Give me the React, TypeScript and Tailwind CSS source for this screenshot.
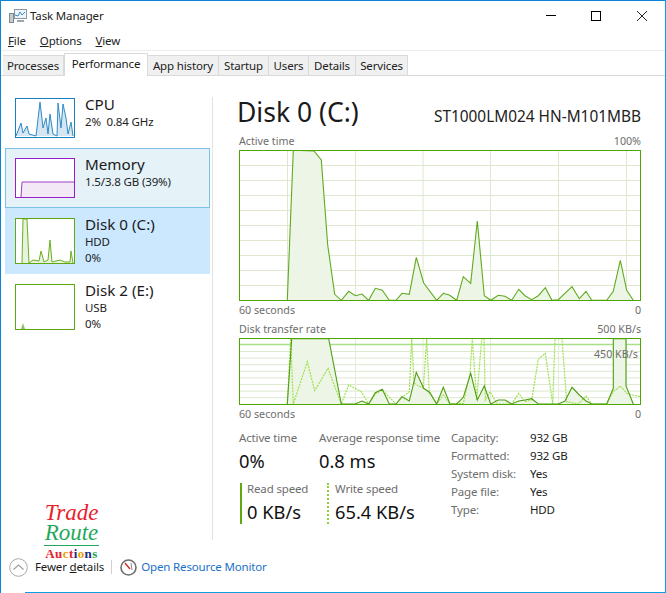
import React from "react";

const sans = "font-['Noto_Sans',sans-serif]";
const small = "text-[11.5px] tracking-[-0.15px]";
const tiny = "text-[10.7px] leading-[16px] text-[#6d6d6d]";

type P = [number, number];
const z4: P[] = [[172,511],[190,61],[252,63],[274,90],[293,345],[314,493],[334,511],[356,484],[376,497],[396,492],[416,511],[436,475],[457,481],[478,511],[498,511],[516,490],[538,493],[559,382],[581,459],[620,511],[640,490]];
const z5: P[] = [[8,490],[28,495],[50,511],[70,440],[92,460],[112,273],[133,497],[152,511],[175,496],[195,499],[215,511],[236,478],[255,497],[275,509],[295,497],[316,473],[336,511],[355,509],[396,470],[418,506],[438,484],[455,511],[500,511],[520,484],[541,391],[560,481],[580,511]];
const active: P[] = [...z4.map(([x, y]): P => [230 + x / 3 - 239, 130 + y / 3 - 150]), ...z5.map(([x, y]): P => [440 + x / 3 - 239, 130 + y / 3 - 150])];

const r6: P[] = [[172,252],[185,56],[296,56],[334,252],[375,252],[396,243],[416,252],[436,218],[457,208],[478,252],[498,252],[516,230],[538,243],[559,157],[581,205],[600,218],[620,252],[640,202]];
const r7: P[] = [[10,202],[30,252],[50,252],[70,232],[92,160],[112,240],[133,198],[152,252],[175,240],[195,240],[215,252],[236,243],[255,240],[275,236],[295,252],[355,252],[375,243],[396,202],[418,225],[438,243],[455,252],[500,252],[520,205],[520,56],[558,56],[558,198],[580,252]];
const read: P[] = [...r6.map(([x, y]): P => [230 + x / 3 - 239, 320 + y / 3 - 338]), ...r7.map(([x, y]): P => [440 + x / 3 - 239, 320 + y / 3 - 338])];

const w6: P[] = [[172,252],[182,56],[190,252],[232,125],[254,212],[294,145],[334,252],[356,195],[394,215],[416,252],[436,222],[457,210],[498,252],[516,232],[538,215],[545,56],[552,190],[580,205],[590,56],[598,218],[620,252],[640,225]];
const w7: P[] = [[30,252],[70,250],[90,160],[97,56],[110,240],[125,56],[132,56],[136,240],[150,215],[172,252],[215,252],[236,220],[255,245],[275,240],[295,118],[316,100],[338,252],[345,56],[366,56],[380,245],[415,252],[438,228],[455,252],[500,252],[520,215],[541,198],[560,220],[578,225],[600,230]];
const write: P[] = [...w6.map(([x, y]): P => [230 + x / 3 - 239, 320 + y / 3 - 338]), ...w7.map(([x, y]): P => [440 + x / 3 - 239, 320 + y / 3 - 338])];

const pts = (a: P[]) => a.map(([x, y]) => `${x.toFixed(1)},${y.toFixed(1)}`).join(" ");
const vGrid = [48.5, 116.5, 184, 251.5, 319.5, 387.5];

function MainChart() {
  const h = Array.from({ length: 9 }, (_, i) => 15.5 + i * 15);
  return (
    <svg width="403" height="152" className="block">
      {h.map((y) => <line key={y} x1="1" x2="401" y1={y} y2={y} stroke="#dde8cf" />)}
      {vGrid.map((x) => <line key={x} x1={x} x2={x} y1="1" y2="150" stroke="#dde8cf" />)}
      <polygon points={pts(active)} fill="#edf5e6" />
      <polyline points={pts(active)} fill="none" stroke="#5fab1e" strokeWidth="1.1" />
      <rect x="0.5" y="0.5" width="401" height="150" fill="none" stroke="#4da600" />
    </svg>
  );
}

function RateChart() {
  const h = Array.from({ length: 9 }, (_, i) => 13.5 + i * 6.6);
  return (
    <svg width="403" height="68" className="block">
      {h.map((y) => <line key={y} x1="1" x2="401" y1={y} y2={y} stroke="#dde8cf" />)}
      {[116.5, 184, 251.5, 319.5, 387.5].map((x) => <line key={x} x1={x} x2={x} y1="1" y2="66" stroke="#e3ecd9" />)}
      <line x1="1" x2="401" y1="6.5" y2="6.5" stroke="#a8e08a" strokeWidth="1.6" />
      <polygon points={pts(read)} fill="#edf5e6" />
      <polyline points={pts(write)} fill="none" stroke="#9fe04f" strokeWidth="1.2" strokeDasharray="2 1" />
      <polyline points={pts(read)} fill="none" stroke="#4f9e12" strokeWidth="1.1" />
      <rect x="0.5" y="0.5" width="401" height="66" fill="none" stroke="#4da600" />
    </svg>
  );
}

function Thumb({ color, h, children }: { color: string; h: number; children?: React.ReactNode }) {
  return (
    <svg width="60" height={h} className="block shrink-0 bg-white">
      {children}
      <rect x="0.5" y="0.5" width="59" height={h - 1} fill="none" stroke={color} />
    </svg>
  );
}

function Item({ name, l2, l3, thumb, cls }: { name: string; l2: string; l3?: string; thumb: React.ReactNode; cls: string }) {
  return (
    <div className={`flex gap-[10px] ${cls}`}>
      {thumb}
      <div className="flex flex-col -mt-[4px]">
        <div className="text-[15.2px] leading-[20px] text-[#1a1a1a]">{name}</div>
        <div className={`${small} leading-[16px] text-[#222]`}>{l2}</div>
        {l3 && <div className={`${small} leading-[16px] text-[#222]`}>{l3}</div>}
      </div>
    </div>
  );
}

function Tab({ label, w, active }: { label: string; w: string; active?: boolean }) {
  return active ? (
    <div className={`${w} h-[23px] -mt-[2px] bg-white border border-b-0 border-[#d9d9d9] flex items-start justify-center pt-[2px] ${small} leading-[16px] text-[#1a1a1a] relative z-10`}>{label}</div>
  ) : (
    <div className={`${w} h-[20px] bg-[#f0f0f0] border border-b-0 border-l-0 border-[#d9d9d9] flex items-center justify-center ${small} leading-[16px] text-[#222]`}>{label}</div>
  );
}

function Stat({ label, value, cls }: { label: string; value: string; cls?: string }) {
  return (
    <div className={cls}>
      <div className={`${small} leading-[16px] text-[#6d6d6d]`}>{label}</div>
      <div className="text-[18.3px] leading-[24px] mt-[3px] text-[#111]">{value}</div>
    </div>
  );
}

export default function App() {
  return (
    <div className={`${sans} w-[666px] h-[593px] bg-white flex flex-col overflow-hidden border-t border-l border-r border-t-[#0a84d8] border-l-[#0a84d8] border-r-[#0a9fe6]`}>
      <div className="h-[29px] shrink-0 flex items-center">
        <svg width="20" height="16" className="ml-[8px]" viewBox="0 0 20 16">
          <rect x="5.5" y="1.5" width="12" height="9" fill="#eef5fa" stroke="#8a9aa5" />
          <polyline points="6,7 9,8 11,4 13,7 16,4" fill="none" stroke="#3a8fc9" />
          <rect x="0.5" y="5.5" width="4" height="9" fill="#c4ccd0" stroke="#7b8b8b" />
          <rect x="8" y="12" width="7" height="2" fill="#9aa7ad" />
        </svg>
        <span className={`ml-[1px] ${small} text-[#222]`}>Task Manager</span>
        <div className="ml-auto flex items-center mr-[18px]">
          <div className="w-[10px] h-px bg-black mr-[35px]" />
          <div className="w-[10px] h-[10px] border border-black mr-[36px]" />
          <svg width="10" height="10" viewBox="0 0 10 10"><path d="M0 0L10 10M10 0L0 10" stroke="#222" /></svg>
        </div>
      </div>
      <div className={`h-[20px] shrink-0 flex items-center pl-[7px] pt-px gap-[14px] ${small} text-[#222]`}>
        <span><u>F</u>ile</span>
        <span><u>O</u>ptions</span>
        <span><u>V</u>iew</span>
      </div>
      <div className="h-[5px] shrink-0 border-t border-[#ececec]" />
      <div className="h-[20px] shrink-0 flex pl-[2px] border-b border-[#d9d9d9] box-content">
        <Tab label="Processes" w="w-[61px] border-l" />
        <Tab label="Performance" w="w-[84px]" active />
        <Tab label="App history" w="w-[71px]" />
        <Tab label="Startup" w="w-[50px]" />
        <Tab label="Users" w="w-[40px]" />
        <Tab label="Details" w="w-[47px]" />
        <Tab label="Services" w="w-[52px]" />
      </div>
      <div className="flex flex-1 min-h-0">
        <div className="w-[212px] h-[443px] shrink-0 border-r border-[#e2e2e2] mt-[21px] relative">
          <div className="pl-[4px] pr-[2px] flex flex-col">
            <Item
              cls="h-[51px] pl-[10px] pt-[1px]"
              name="CPU"
              l2={"2%\u00a0 0.84 GHz"}
              thumb={
                <Thumb color="#1a80bd" h={40}>
                  <polygon points="1,38 6,25 8,35 12,28 14,36 21,38 25,4 28,30 31,20 33,36 35,16 38,36 42,38 43,5 46,30 48,6 51,20 53,36 56,24 58,38" fill="#d5e6f2" />
                  <polyline points="1,38 6,25 8,35 12,28 14,36 21,38 25,4 28,30 31,20 33,36 35,16 38,36 42,38 43,5 46,30 48,6 51,20 53,36 56,24 58,38" fill="none" stroke="#2f8bc4" />
                </Thumb>
              }
            />
            <Item
              cls="h-[60px] pt-[9px] pl-[9px] border border-[#7cc2e4] bg-[#e5f3f9]"
              name="Memory"
              l2="1.5/3.8 GB (39%)"
              thumb={
                <Thumb color="#9a1cc4" h={40}>
                  <polygon points="6,39 7,24 59,24 59,39" fill="#f3e9f6" />
                  <polyline points="6,39 7,24 59,24" fill="none" stroke="#a23cc8" />
                </Thumb>
              }
            />
            <Item
              cls="h-[66px] pt-[10px] pl-[10px] bg-[#cce8ff]"
              name="Disk 0 (C:)"
              l2="HDD"
              l3="0%"
              thumb={
                <Thumb color="#5fa80f" h={46}>
                  <polygon points="7,45 8,1 12,1 14,45 18,42 24,43 26,33 29,44 33,42 35,22 37,44 45,42 50,44 55,44 56,33 58,45" fill="#e8f2df" />
                  <polyline points="7,45 8,1 12,1 14,45 18,42 24,43 26,33 29,44 33,42 35,22 37,44 45,42 50,44 55,44 56,33 58,45" fill="none" stroke="#6cb020" />
                </Thumb>
              }
            />
            <Item
              cls="h-[56px] pt-[10px] pl-[10px]"
              name="Disk 2 (E:)"
              l2="USB"
              l3="0%"
              thumb={
                <Thumb color="#5fa80f" h={46}>
                  <polygon points="6,45 8,39 10,45" fill="#8fc06a" />
                </Thumb>
              }
            />
          </div>
          <div className="absolute left-[43px] top-[405px] w-[55px] flex flex-col items-center font-['Liberation_Serif',serif]">
            <div className="text-[23px] leading-[21px] italic text-[#e8202c]">Trade</div>
            <div className="text-[23px] leading-[20px] italic text-[#1fa85a] border-b border-[#1fa85a] w-full text-center pb-[2px]">Route</div>
            <div className="text-[13px] leading-[13px] font-bold whitespace-nowrap mt-[1px] tracking-[0.4px]">
              <span className="text-[#e8202c]">Au</span>
              <span className="text-[#e8a000]">c</span>
              <span className="text-[#e8202c]">t</span>
              <span className="text-[#1a2a7a]">i</span>
              <span className="text-[#e8a000]">o</span>
              <span className="text-[#1a2a7a]">n</span>
              <span className="text-[#1fa85a]">s</span>
            </div>
          </div>
        </div>
        <div className="flex-1 pl-[26px] pt-[20px]">
          <div className="flex items-end h-[33px] w-[403px] justify-between">
            <span className="text-[26.5px] leading-[33px] text-[#1a1a1a] -ml-[2px]">Disk 0 (C:)</span>
            <span className="text-[15.4px] leading-[20px] pb-[2px] text-[#222] pr-px">ST1000LM024 HN-M101MBB</span>
          </div>
          <div className={`flex justify-between w-[402px] h-[16px] mt-[4px] mb-px ${tiny}`}>
            <span>Active time</span><span>100%</span>
          </div>
          <MainChart />
          <div className={`flex justify-between w-[402px] h-[16px] ${tiny}`}>
            <span>60 seconds</span><span>0</span>
          </div>
          <div className={`flex justify-between w-[402px] h-[16px] mt-[3px] mb-px ${tiny}`}>
            <span>Disk transfer rate</span><span>500 KB/s</span>
          </div>
          <div className="relative">
            <RateChart />
            <div className={`absolute left-[355px] top-[8px] ${tiny}`}>450 KB/s</div>
          </div>
          <div className={`flex justify-between w-[402px] h-[16px] ${tiny}`}>
            <span>60 seconds</span><span>0</span>
          </div>
          <div className="flex mt-[8px]">
            <div className="w-[212px]">
              <div className="flex">
                <Stat label="Active time" value="0%" cls="w-[80px]" />
                <Stat label="Average response time" value="0.8 ms" />
              </div>
              <div className="flex mt-[10px]">
                <div className="w-[87px] flex border-l-2 border-[#5fa80f] ml-px pl-[5px] h-[41px]">
                  <Stat label="Read speed" value="0 KB/s" cls="-mt-[2px]" />
                </div>
                <div className="flex border-l-2 border-dotted border-[#8ed03a] pl-[6px] h-[41px]">
                  <Stat label="Write speed" value="65.4 KB/s" cls="-mt-[2px]" />
                </div>
              </div>
            </div>
            <div className={`grid grid-cols-[79px_1fr] auto-rows-[18px] ${small} leading-[16px]`}>
              {[["Capacity:", "932 GB"], ["Formatted:", "932 GB"], ["System disk:", "Yes"], ["Page file:", "Yes"], ["Type:", "HDD"]].map(([a, b]) => (
                <React.Fragment key={a}>
                  <span className="text-[#6d6d6d]">{a}</span>
                  <span className="text-[#222]">{b}</span>
                </React.Fragment>
              ))}
            </div>
          </div>
        </div>
      </div>
      <div className={`h-[40px] shrink-0 flex items-center pl-[8px] pb-[10px] ${small} leading-[14px]`}>
        <svg width="19" height="19" viewBox="0 0 19 19"><circle cx="9.5" cy="9.5" r="8.8" fill="#fff" stroke="#a8a8a8" /><polyline points="4.5,11.5 9.5,7 14.5,11.5" fill="none" stroke="#a0a0a0" strokeWidth="1.2" /></svg>
        <span className="ml-[7px] text-[#1a1a1a]">Fewer <u>d</u>etails</span>
        <div className="w-px h-[14px] bg-[#d0d0d0] ml-[7px]" />
        <svg width="17" height="17" viewBox="0 0 17 17" className="ml-[8px]">
          <circle cx="8.5" cy="8.5" r="7.5" fill="#fff" stroke="#6f6f6f" strokeWidth="1.6" />
          <path d="M5 4L10 10" stroke="#d42a20" strokeWidth="1.4" />
          <path d="M11 4L12 11" stroke="#8a8a8a" strokeWidth="1" />
        </svg>
        <span className="ml-[4px] text-[#1a6fc9]">Open Resource Monitor</span>
      </div>
      <div className="h-px shrink-0 ml-[24px] bg-[#0a9fe6]" />
    </div>
  );
}
